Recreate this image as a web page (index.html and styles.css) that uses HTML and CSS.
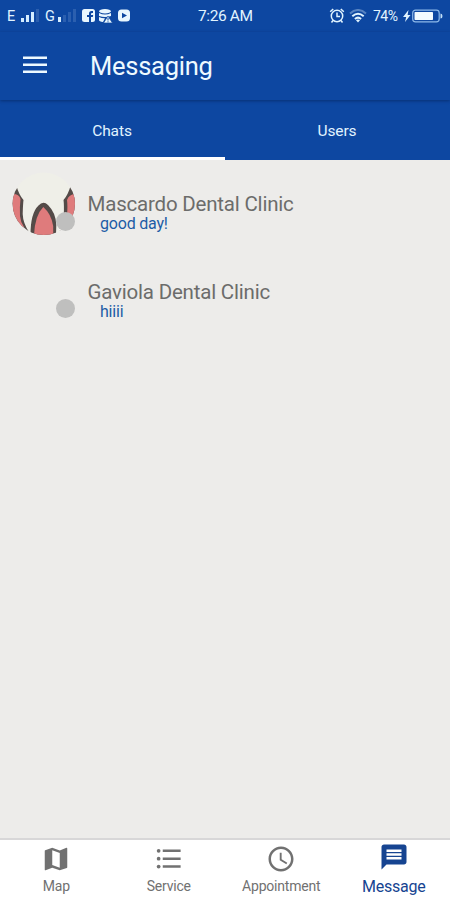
FILE: index.html
```html
<!DOCTYPE html>
<html lang="en">
<head>
<meta charset="utf-8">
<title>Messaging</title>
<link rel="stylesheet" href="styles.css">
</head>
<body>
<div class="app">
  <header class="status">
    <div class="status-left">
      <span class="carrier">E</span>
      <svg class="signal" width="19" height="14" viewBox="0 0 19 14" fill="#d4edff"><path d="M1 9h3v4H1zM6 6h3v7H6zM11 3h3v10h-3z"/><path d="M16 0h3v13h-3z" opacity=".15"/></svg>
      <span class="carrier second">G</span>
      <svg class="signal" width="19" height="14" viewBox="0 0 19 14" fill="#d4edff"><path d="M1 8h3v5H1z"/><path d="M6 6h3v7H6zM11 3h3v10h-3zM16 0h3v13h-3z" opacity=".15"/></svg>
      <svg class="notices" width="50" height="16" viewBox="0 0 50 16">
        <rect x="1" y="1" width="13" height="13" rx="2.5" fill="#e9f7ff"/>
        <path d="M8 14V9H6V7h2V5.500Q8 3 10.500 3H12v2h-1q-1 0-1 1v1h2.200l-.4 2H10v5z" fill="#0d47a1"/>
        <ellipse cx="24" cy="3.200" rx="6" ry="2.200" fill="#e9f7ff"/>
        <path d="M18 5q6 3 12 0v3q-6 2-12 0zM18 9q3 1.500 6 1.300L22 14q-4-.5-4-2z" fill="#e9f7ff"/>
        <path d="m27 8 4.500 7h-9z" fill="#e9f7ff" stroke="#0d47a1" stroke-width=".7"/><path d="M27 10v2.500m0 .8v1" stroke="#0d47a1"/>
        <rect x="37" y="1.500" width="12" height="12" rx="3.500" fill="#e9f7ff"/><path d="m41 4.700 5 2.800-5 2.800z" fill="#0d47a1"/>
      </svg>
    </div>
    <time class="clock">7:26 AM</time>
    <div class="status-right">
      <svg width="16" height="16" viewBox="0 0 16 16" fill="none" stroke="#e1f4ff" stroke-width="1.500"><circle cx="8" cy="8" r="5.700"/><path d="M8 4.500v4h3M1.200 3.700l3-2.700M14.800 3.700l-3-2.700M4 12.500l-1.500 2M12 12.500l1.500 2"/></svg>
      <svg class="wifi" width="18" height="14" viewBox="0 0 18 14" fill="none" stroke="#e1f4ff" stroke-width="2"><path d="M1 4.500q8-7 16 0" opacity=".35"/><path d="M3.300 7.200q5.700-5 11.400 0M5.900 9.900q3.100-2.600 6.200 0"/><path d="M7 11.200q2-1.300 4 0L9 13.500z" fill="#e1f4ff" stroke="none"/></svg>
      <span class="percent">74%</span>
      <svg class="battery" width="40" height="16" viewBox="0 0 40 16"><path d="M5.500 2 0 9h3.200L2 14l5.500-7H4.600z" fill="#e1f4ff"/><rect x="9.700" y="2.200" width="26.500" height="11.600" rx="2.800" fill="none" stroke="#8db9e9" stroke-width="1.200"/><rect x="11.500" y="4" width="18.500" height="8" rx=".7" fill="#f3fbff"/><path d="M37.500 5.500q2 0 2 2.500t-2 2.500z" fill="#c0def7"/></svg>
    </div>
  </header>

  <div class="toolbar">
    <svg class="menu" width="24" height="18" viewBox="0 0 24 18" fill="#eefaff"><path d="M0 .5h24V3H0zM0 7.500h24V10H0zM0 14.500h24V17H0z"/></svg>
    <h1>Messaging</h1>
  </div>

  <nav class="tabs">
    <a class="tab active">Chats</a>
    <a class="tab">Users</a>
  </nav>

  <main class="chats">
    <article class="chat">
      <div class="avatar">
        <svg width="63" height="63" viewBox="0 0 63 63">
          <defs><clipPath id="circle"><circle cx="31.800" cy="31.800" r="31.200"/></clipPath></defs>
          <g clip-path="url(#circle)">
            <path d="M0 0h63v63H0z" fill="#efefe8"/>
            <path d="M0 14h4.500Q7 23 11.500 28 11 32 10.700 42 11 51 17 60L0 63z" fill="#544b48"/>
            <path d="M0 22q7-.5 8.500 5-1 8-.5 17 .5 6 4 11L0 60z" fill="#df7b7c"/>
            <path d="M63 14h-4.500Q56 23 51.500 28q.7 5 .3 15l-1 10H63z" fill="#544b48"/>
            <path d="M63 22q-6 .5-8 6 .8 6 0 15L55 53h8z" fill="#df7b7c"/>
            <path d="M18.500 63q0-22 8-29.500 4.700-5 9.500-.5 8 8 8.300 20L44 63z" fill="#544b48"/>
            <path d="M22 63q1-20 9.300-28 8 7 9.900 19V63z" fill="#df7b7c"/>
            <path d="M46 55q4 4 9 3l-7 4z" fill="#f8f7f2"/><path d="m48 58-1 3 3-2z" fill="#544b48"/>
          </g>
        </svg>
        <span class="presence"></span>
      </div>
      <div class="chat-text"><h2>Mascardo Dental Clinic</h2><p>good day!</p></div>
    </article>
    <article class="chat">
      <div class="avatar"><span class="presence"></span></div>
      <div class="chat-text"><h2>Gaviola Dental Clinic</h2><p>hiiii</p></div>
    </article>
  </main>

  <nav class="bottom">
    <a class="item"><svg viewBox="0 0 24 24"><path d="M20.500 3l-.16.03L15 5.100 9 3 3.360 4.900c-.21.070-.36.250-.36.480V20.500c0 .28.220.5.500.5l.16-.03L9 18.900l6 2.100 5.640-1.900c.21-.07.36-.25.36-.48V3.500c0-.28-.22-.5-.5-.5zM15 19l-6-2.110V5l6 2.110V19z"/></svg><span>Map</span></a>
    <a class="item"><svg viewBox="0 0 24 24"><circle cx="3.700" cy="5.400" r="1.500"/><circle cx="3.700" cy="11.700" r="1.500"/><circle cx="3.700" cy="18" r="1.500"/><path d="M7 4.400h14.300v2H7zM7 10.700h14.300v2H7zM7 17h14.300v2H7z"/></svg><span>Service</span></a>
    <a class="item"><svg viewBox="0 0 24 24"><path d="M11.990 2C6.470 2 2 6.480 2 12s4.470 10 9.990 10C17.520 22 22 17.520 22 12S17.520 2 11.990 2zM12 20c-4.420 0-8-3.580-8-8s3.580-8 8-8 8 3.580 8 8-3.580 8-8 8zm.5-13H11v6l5.250 3.150.75-1.230-4.500-2.670z"/></svg><span>Appointment</span></a>
    <a class="item active"><svg viewBox="0 0 24 24"><path d="M20 2H4c-1.100 0-1.990.9-1.990 2L2 22l4-4h14c1.100 0 2-.9 2-2V4c0-1.100-.9-2-2-2zm-2 12H6v-2h12v2zm0-3H6V9h12v2zm0-3H6V6h12v2z"/></svg><span>Message</span></a>
  </nav>
</div>
</body>
</html>
```
FILE: styles.css
```css
* { box-sizing: border-box; }
body, h1, h2, p { margin: 0; font-weight: 400; }
body { font-family: Roboto, sans-serif; background: #edecea; }
svg { display: block; flex: none; }
.app { height: 900px; display: flex; flex-direction: column; }
.status {
  height: 32px; flex: none; display: grid; grid-template-columns: 198px 1fr auto;
  align-items: center; background: #0d47a1; color: #e1f4ff; padding-right: 7px;
}
.status-left, .status-right { display: flex; align-items: center; }
.status-left { padding-left: 7px; }
.carrier { width: 13px; font-size: 14.500px; line-height: 18px; padding-top: 1px; }
.carrier.second { margin-left: 6px; width: 12px; }
.signal { margin-top: -1px; }
.notices { margin: -1px 0 0 5px; }
.clock { font-size: 15.500px; letter-spacing: -.4px; }
.wifi { margin-left: 4px; }
.percent { margin-left: 6px; width: 27px; font-size: 14px; letter-spacing: -.5px; white-space: nowrap; }
.battery { margin-left: 3px; margin-top: -1px; }
.toolbar {
  height: 68px; flex: none; display: flex; align-items: center; background: #0d47a1;
  padding: 0 0 1px 23px; box-shadow: 0 1px 3px rgba(0, 20, 60, .45); z-index: 1;
}
.menu { margin-top: -2px; }
h1 { margin-left: 43px; font-size: 25.500px; letter-spacing: -.25px; line-height: 32px; color: #eefaff; }
.tabs { height: 60px; flex: none; display: flex; background: #0d47a1; }
.tab {
  flex: 1; display: flex; align-items: center; justify-content: center; padding: 4px 1px 0 0;
  color: #e1f4ff; font-size: 15.500px; letter-spacing: -.1px; border-bottom: 3px solid transparent;
}
.tab.active { border-color: #fff; }
.chats { flex: 1; background: #edecea; padding-top: 12px; }
.chat { height: 87.500px; display: flex; padding-left: 12px; }
.avatar { width: 63px; height: 63px; position: relative; }
.presence {
  position: absolute; left: 44px; top: 39.500px; width: 19px; height: 19px;
  border-radius: 50%; background: #bfbfbe;
}
.chat-text { padding: 21px 0 0 12.500px; }
h2 { font-size: 20.500px; letter-spacing: -.2px; line-height: 22px; color: #6c6c6b; }
.chat-text p { margin-left: 12.500px; font-size: 16px; letter-spacing: -.2px; line-height: 18px; color: #1d5ca6; }
.bottom { height: 62px; flex: none; display: flex; background: #fff; border-top: 2px solid #d8d7d8; }
.item {
  flex: 1; display: flex; flex-direction: column; align-items: center; padding-top: 4px;
  color: #717171; font-size: 14px; letter-spacing: -.2px; line-height: 18px;
}
.item svg { width: 30px; height: 30px; fill: currentColor; }
.item span { margin-top: 3px; }
.item.active { color: #164491; padding-top: 2px; font-size: 16px; }
.item.active span { margin-top: 6px; }
```
